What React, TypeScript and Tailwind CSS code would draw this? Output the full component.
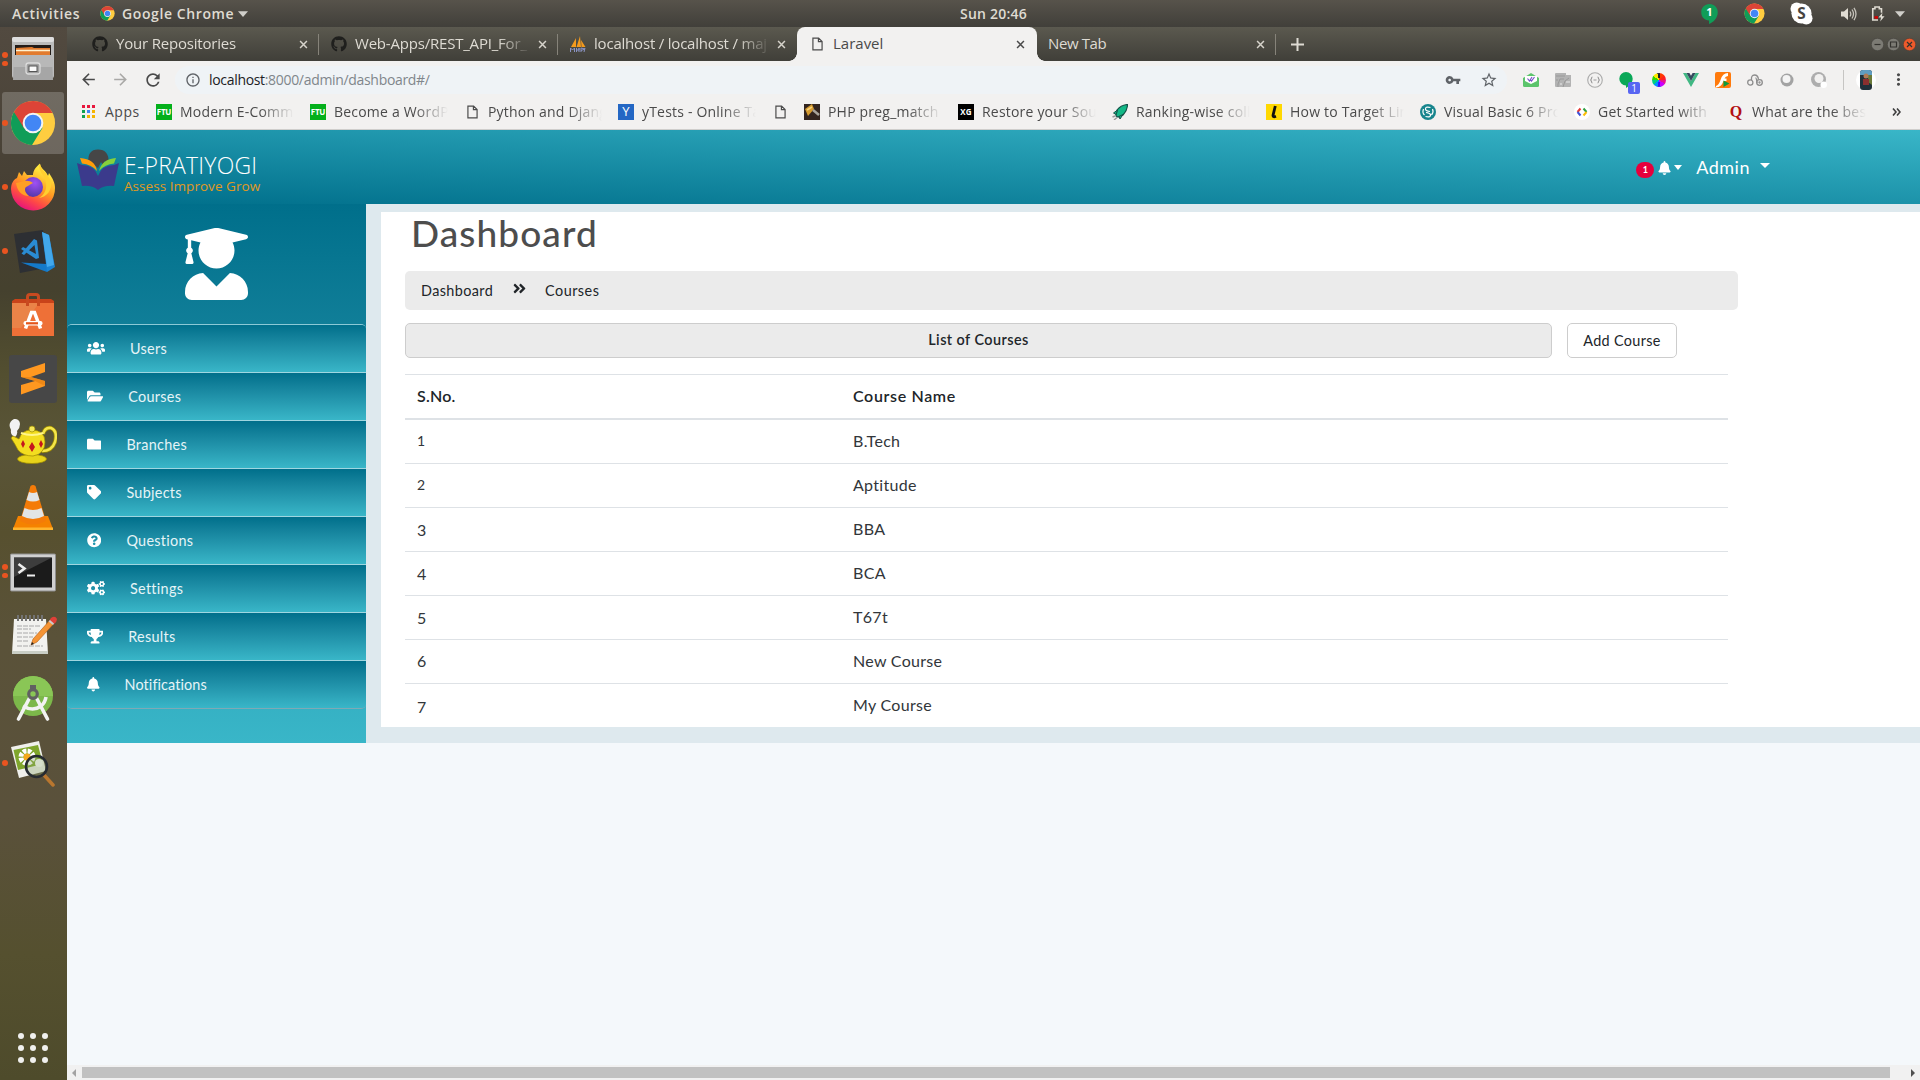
import React from "react";
import {
  FaUserGraduate, FaUsers, FaFolderOpen, FaFolder, FaTag, FaQuestionCircle, FaCogs, FaTrophy, FaBell,
  FaGithub, FaAngleDoubleRight,
} from "react-icons/fa";
import { MdArrowBack, MdArrowForward, MdRefresh, MdInfoOutline, MdVpnKey, MdStarBorder, MdMoreVert } from "react-icons/md";

/* ---------- shared drawings ---------- */

function Chrome({ className }: { className: string }) {
  return (
    <svg viewBox="0 0 48 48" className={className} preserveAspectRatio="none">
      <circle cx="24" cy="24" r="23" fill="#ffcd40" />
      <path d="M24 24 L4.1 12.5 A23 23 0 0 0 23 47 L34 29 Z" fill="#109d58" />
      <path d="M24 13.5 H44.4 A23 23 0 0 0 4.1 12.5 L15 30 Z" fill="#dc4437" />
      <circle cx="24" cy="24" r="10.8" fill="#f4f4f4" />
      <circle cx="24" cy="24" r="8.7" fill="#4286f5" />
    </svg>
  );
}

function FileIcon({ className }: { className: string }) {
  return (
    <svg viewBox="0 0 12 15" className={className} fill="none" stroke="#4b4b4b" strokeWidth="1.3">
      <path d="M1 1 H7.2 L11 4.8 V14 H1 Z M7 1 V5 H11" />
    </svg>
  );
}

function Cross({ className }: { className: string }) {
  return (
    <svg viewBox="0 0 10 10" className={className} fill="none" strokeWidth="1.7">
      <path d="M1.2 1.2 L8.8 8.8 M8.8 1.2 L1.2 8.8" />
    </svg>
  );
}

function Down({ className }: { className: string }) {
  return (
    <svg viewBox="0 0 10 6" className={className}>
      <path d="M0 0.3 H10 L5 6 Z" fill="#d0cfca" />
    </svg>
  );
}

/* ---------- desktop top bar ---------- */

function TopBar() {
  return (
    <div className="grid h-[27px] grid-cols-[1fr_auto_1fr] items-center bg-linear-to-b from-[#57534b] to-[#413f3a] text-[14px] font-semibold text-[#dfdbd2]">
      <div className="flex items-center pl-3">
        <span className="w-[88px] tracking-[0.7px]">Activities</span>
        <Chrome className="size-[15px]" />
        <span className="ml-[7px] w-[116px] whitespace-nowrap tracking-[0.6px]">Google Chrome</span>
        <Down className="h-[6px] w-[10px]" />
      </div>
      <div className="pl-[67px] text-[14px]"><span className="tracking-[0.2px]">Sun 20:46</span></div>
      <div className="flex items-center justify-end pr-[15px]">
        <svg viewBox="0 0 20 24" className="mr-[25px] h-[22px] w-[19px]">
          <path d="M10 1 C4.500 1 1 5 1 10 C1 15 4.500 19 9.500 19 V23 C14 21 19 16.500 19 10 C19 5 15.500 1 10 1 Z" fill="#109d58" />
          <text x="10" y="14" fontSize="12" fontWeight="700" textAnchor="middle" fill="#fff">1</text>
        </svg>
        <Chrome className="mr-[25px] size-[21px]" />
        <svg viewBox="0 0 24 24" className="mr-[28px] size-[23px]">
          <circle cx="12" cy="12" r="10.500" fill="#fff" />
          <circle cx="7" cy="7" r="6.500" fill="#fff" />
          <circle cx="17" cy="17" r="6.500" fill="#fff" />
          <text x="12" y="18" fontSize="16" fontWeight="700" textAnchor="middle" fill="#47443f">S</text>
        </svg>
        <svg viewBox="0 0 16 16" className="mr-[14px] size-4">
          <path d="M0 5.500 H3 L7 2 V14 L3 10.500 H0 Z" fill="#dfdbd2" />
          <path d="M9 5.500 Q10.600 8 9 10.500 M11 3.500 Q14 8 11 12.500 M13 1.800 Q17 8 13 14.200" fill="none" stroke="#c5c2ba" strokeWidth="1.300" />
        </svg>
        <svg viewBox="0 0 16 18" className="mr-[10px] h-[17px] w-[14px]">
          <path d="M8 16.500 H2 V3.500 H4.500 V1.500 H9.500 V3.500 H12 V8" fill="none" stroke="#dfdbd2" strokeWidth="1.800" />
          <rect x="4" y="12" width="4" height="3" fill="#d40000" />
          <path d="M13 8 L8.500 13.500 H11.500 L10.500 18 L15.500 12 H12.500 Z" fill="#dfdbd2" />
        </svg>
        <Down className="h-[6px] w-[10px]" />
      </div>
    </div>
  );
}

/* ---------- dock ---------- */

function Files() {
  return (
    <svg viewBox="0 0 48 48" className="size-12">
      <rect x="3" y="2" width="42" height="41" rx="2" fill="#bcbcbc" />
      <rect x="3" y="2" width="42" height="5" rx="2" fill="#dedede" />
      <rect x="6" y="10" width="36" height="12" fill="#241c18" />
      <path d="M7 13 L23 12 L25 13 H41 V20 H7 Z" fill="#e27b2e" />
      <path d="M7 15.500 H41" stroke="#fff1cf" strokeWidth="1.500" />
      <path d="M5 20 H43 L44 45 H4 Z" fill="#a6a6a6" />
      <path d="M5 20 H43 L44 32 H4 Z" fill="#b8b8b8" />
      <rect x="17" y="28" width="14" height="11" rx="2.500" fill="#a0a0a0" stroke="#dcdcdc" strokeWidth="1.300" />
      <rect x="20" y="31" width="8" height="5.500" fill="#fafafa" stroke="#555" />
    </svg>
  );
}

function Firefox() {
  return (
    <svg viewBox="0 0 48 48" className="size-12">
      <defs>
        <linearGradient id="fx" x1="0.8" y1="0" x2="0.3" y2="1">
          <stop offset="0.15" stopColor="#ffe83f" />
          <stop offset="0.5" stopColor="#ff9a22" />
          <stop offset="0.75" stopColor="#ff4a45" />
          <stop offset="1" stopColor="#e50f80" />
        </linearGradient>
        <radialGradient id="fxp" cx="0.6" cy="0.3" r="0.8">
          <stop offset="0" stopColor="#a050f5" />
          <stop offset="1" stopColor="#4b35a0" />
        </radialGradient>
      </defs>
      <path d="M8 15 L10 9 L13 13 L15 8 L18 12 L24 12 C24 7 28 3 31 0.500 C31 6 37 7 39 13 L40 10 C44 16 46 20 46 25 A22 22 0 0 1 2 26 C2 21 4 17 8 15 Z" fill="url(#fx)" />
      <circle cx="24" cy="24" r="10" fill="url(#fxp)" />
      <path d="M7 20 L14 18.500 C18 17 21 18 24 20 C21 21 20 23 17 24 C15 26 16 30 20 33 C12 33 8 27 7 20 Z" fill="#ff9f25" />
      <path d="M31 1 C28 8 36 12 37 20 C38 27 35 32 30 35 C38 34 43 27 42 19 C40 12 33 8 31 1 Z" fill="#ffcf30" />
    </svg>
  );
}

function VsCode() {
  return (
    <svg viewBox="0 0 48 48" className="size-12">
      <path d="M5 7 L34 3 L42 40 L11 46 Z" fill="#2d2f33" />
      <path d="M12 35.500 L38 37 L38 45 Z" fill="#1479c9" />
      <path d="M33 5 L40 8 L46 40 L38 45 Z" fill="#1b83d3" />
      <path d="M33 5 L40 8 L45 38 L38 40 Z" fill="#42a8ec" />
      <path d="M25 12 L28 13.500 L30 31 L27 32 L12 22 L14 20 L27 27 L25.500 18 L15 28 L12.500 26.500 Z" fill="#2a8bd2" />
    </svg>
  );
}

function Software() {
  return (
    <svg viewBox="0 0 48 48" className="mt-0.5 size-12">
      <path d="M3 9 L6 7 H42 L45 9 V12 H3 Z" fill="#c9431a" />
      <rect x="3" y="11" width="42" height="33" fill="#ee7037" />
      <path d="M3 11 H30 L12 36 H3 Z" fill="#e88b50" opacity="0.7" />
      <path d="M18.500 14 V5 Q18.500 2.500 21 2.500 H27 Q29.500 2.500 29.500 5 V14" fill="none" stroke="#c84a20" strokeWidth="3" />
      <path d="M16.500 36.500 L22.500 20.500 H25.500 L31.500 36.500" fill="none" stroke="#fff" strokeWidth="3.500" />
      <rect x="14.500" y="29" width="19" height="4.500" rx="2" fill="#fff" />
      <rect x="17" y="30.200" width="12" height="2.200" fill="#e4551b" />
    </svg>
  );
}

function Sublime() {
  return (
    <svg viewBox="0 0 48 48" className="size-12">
      <rect width="48" height="48" rx="3" fill="#474747" />
      <path d="M12 16 L36 8 V17 L22 22 L36 26 V31 L12 39.500 V30 L26 26 L12 22 Z" fill="#ff9820" />
      <path d="M12 22 L22 22 L36 26 V31 L26 26 Z" fill="#e27d10" opacity="0.6" />
    </svg>
  );
}

function Teapot() {
  return (
    <svg viewBox="0 0 48 48" className="-mt-1 size-12">
      <path d="M5 2 a5 5 0 0 1 6 5 q0 4 -3 7 q1 3 -2 6 q-5 -2 -4 -7 q-4 -7 3 -11 Z" fill="#f2f2f2" />
      <path d="M34 17 Q36 10 42 11 Q49 14 46 25 Q43 34 33 34" fill="none" stroke="#9c8a00" strokeWidth="4" />
      <path d="M34 17 Q36 10 42 11 Q49 14 46 25 Q43 34 33 34" fill="none" stroke="#f4e54a" strokeWidth="2.500" />
      <ellipse cx="23" cy="42" rx="14.500" ry="4.500" fill="#e8d31a" stroke="#9c8a00" strokeWidth="0.700" />
      <path d="M4 19 L10 22 Q13 13 22 13 Q36 13 36 25 Q36 37 24 39 Q14 39 9 33 Q6 27 2 21 Z" fill="#f3dd20" stroke="#9c8a00" strokeWidth="0.700" />
      <path d="M12 16 Q23 20 34 16" fill="none" stroke="#fff58a" strokeWidth="2" />
      <circle cx="23" cy="12" r="3" fill="#f6e85a" stroke="#9c8a00" strokeWidth="0.700" />
      <path d="M14 23 l2 4 -2 4 -2 -4 Z M23 25 l3 5 -3 5 -3 -5 Z M32 23 l2 4 -2 4 -2 -4 Z" fill="#c5161d" />
    </svg>
  );
}

function Vlc() {
  return (
    <svg viewBox="0 0 48 48" className="size-12">
      <path d="M9 33 H39 L44 46 H4 Z" fill="#f58200" />
      <path d="M4 44.500 H44 V47 H4 Z" fill="#ffb52e" />
      <path d="M21.500 3 Q24 1 26.500 3 L37 38 Q24 45 11 38 Z" fill="#f47b08" />
      <path d="M20 9 Q24 11 28 9 L30.500 17 Q24 20 17.500 17 Z M15.500 25 Q24 29 32.500 25 L35 33 Q24 39 13 33 Z" fill="#e2e5e6" />
    </svg>
  );
}

function Terminal() {
  return (
    <svg viewBox="0 0 48 48" className="size-12">
      <rect x="1.500" y="7" width="45" height="37" rx="1" fill="#d0d0d0" stroke="#8e8e8e" />
      <rect x="5" y="10.500" width="38" height="30" fill="#1b1b1b" />
      <path d="M5 10.500 H43 L5 30 Z" fill="#4b4b4b" opacity="0.7" />
      <path d="M9.500 17 L15.500 21.500 L9.500 26" fill="none" stroke="#eee" strokeWidth="2.600" />
      <path d="M18 28.500 H26" stroke="#eee" strokeWidth="2" />
    </svg>
  );
}

function Notes() {
  return (
    <svg viewBox="0 0 48 48" className="size-12">
      <path d="M5 8 H37 L39 43 H3 Z" fill="#f2f2ef" />
      <path d="M3 40 H39 V43 H3 Z" fill="#c9cec5" />
      <path d="M9 4 v6 M13 4 v6 M17 4 v6 M21 4 v6 M25 4 v6 M29 4 v6 M33 4 v6" stroke="#737373" strokeWidth="2" />
      <path d="M8 15 H32 M8 18 H22 M8 22 H28 M8 26 H24 M8 30 H20 M8 35 H34" stroke="#a8a8a8" strokeWidth="1" strokeDasharray="5 1" />
      <path d="M22 34 L24 28 L41 9 L45 12.500 L28 31 Z" fill="#f59434" stroke="#b35c12" strokeWidth="0.600" />
      <path d="M40 10 L42 7 Q46 4 48 8 Q48 11 45 13 Z" fill="#df4038" />
      <path d="M39.500 10.500 L41 9 L45 12.500 L44 14 Z" fill="#ccc" />
      <path d="M22 34 L23 31 L25 33 Z" fill="#222" />
    </svg>
  );
}

function Android() {
  return (
    <svg viewBox="0 0 48 48" className="size-12">
      <circle cx="24" cy="21" r="20" fill="#7cb84a" />
      <path d="M4 21 a20 20 0 0 1 40 0 Z" fill="#8ac656" />
      <path d="M20 24 L9.500 44 M28 24 L38.500 44" stroke="#f2f2f2" strokeWidth="3.600" strokeLinecap="round" />
      <path d="M14 31 Q24 37 32 31 Q36 28 37 22" fill="none" stroke="#f2f2f2" strokeWidth="3.600" />
      <rect x="21" y="10" width="6" height="6" fill="#616161" />
      <circle cx="24" cy="19" r="4.300" fill="none" stroke="#616161" strokeWidth="3.200" />
    </svg>
  );
}

function ImageViewer() {
  return (
    <svg viewBox="0 0 48 48" className="size-12">
      <path d="M2 8 L30 2 L37 32 L10 39 Z" fill="#f0f0ec" />
      <path d="M4.500 11 L29 6 L34 25 L9 31 Z" fill="#7fa62c" />
      <circle cx="18" cy="18" r="6" fill="none" stroke="#fff" strokeWidth="5" strokeDasharray="3.500 1.200" />
      <circle cx="18" cy="18" r="3.500" fill="#f5a81c" />
      <circle cx="30" cy="24" r="4" fill="#fff" />
      <path d="M35 36 L44 46" stroke="#b9772f" strokeWidth="3.500" strokeLinecap="round" />
      <circle cx="27.500" cy="27.500" r="10.500" fill="#88a06a" fillOpacity="0.350" stroke="#262b31" strokeWidth="2.600" />
    </svg>
  );
}

const dock = [
  { icon: <Files />, dots: 2 },
  { icon: <Chrome className="size-[46px]" />, dots: 1, active: true },
  { icon: <Firefox />, dots: 1 },
  { icon: <VsCode />, dots: 1 },
  { icon: <Software />, dots: 0 },
  { icon: <Sublime />, dots: 0 },
  { icon: <Teapot />, dots: 0 },
  { icon: <Vlc />, dots: 0 },
  { icon: <Terminal />, dots: 2 },
  { icon: <Notes />, dots: 0 },
  { icon: <Android />, dots: 0 },
  { icon: <ImageViewer />, dots: 1 },
];

function Dock() {
  return (
    <div className="flex w-[67px] shrink-0 flex-col bg-[linear-gradient(to_bottom,#524a40_0%,#474034_15%,#45412e_25%,#534f30_33%,#5a5538_40%,#57502f_48%,#5a5239_58%,#5a513b_75%,#55502f_88%,#4e4b2b_100%)]">
      {dock.map((d, i) => (
        <div key={i} className="relative flex h-16 items-center justify-center pr-[1px]">
          {d.active && <div className="absolute top-px left-[2px] h-[62px] w-[62px] rounded-[3px] bg-white/20" />}
          <div className="relative">{d.icon}</div>
          <div className="absolute left-[2px] flex flex-col gap-[3px]">
            {d.dots > 0 && <i className="size-[5.5px] rounded-full bg-[#e95420]" />}
            {d.dots > 1 && <i className="size-[5.5px] rounded-full bg-[#e95420]" />}
          </div>
        </div>
      ))}
      <div className="mt-auto mb-[17px] ml-[18px] grid w-[30px] grid-cols-3 gap-[6px]">
        {Array.from({ length: 9 }, (_, i) => <i key={i} className="size-[6px] rounded-full bg-[#f0f0ee]" />)}
      </div>
    </div>
  );
}

/* ---------- browser chrome ---------- */

function Sails() {
  return (
    <svg viewBox="0 0 16 16" className="size-4">
      <path d="M1 11 L6 2 V11 Z M6.500 11 L10 0 L11 11 Z M11.500 11 L11 4 L15.500 11 Z" fill="#f39a1e" />
      <path d="M0.500 16 V12 L2.500 14 L4.500 12 V16 M6.500 12 V16 M6.500 14 H9 V12 V16 M11 16 V12 L15 13 L11 14.500 M14 16 L15 12" fill="none" stroke="#8a93c4" strokeWidth="1" />
    </svg>
  );
}

const darkTabs = [
  { title: "Your Repositories", icon: <FaGithub className="size-4 text-[#1f1f1d]" />, sep: true },
  { title: "Web-Apps/REST_API_For_", icon: <FaGithub className="size-4 text-[#1f1f1d]" />, sep: true },
  { title: "localhost / localhost / maj", icon: <Sails />, sep: false },
];

const FADE = "[mask-image:linear-gradient(to_right,#000_calc(100%-34px),transparent)]";

function Tabs() {
  return (
    <div className="flex h-[34px] bg-linear-to-b from-[#5b594f] to-[#403f39] pl-[13px] text-[15px] tracking-[-0.2px] text-[#dedbd3]">
      {darkTabs.map((t) => (
        <div key={t.title} className="flex w-[239px] items-center pl-3">
          {t.icon}
          <span className={`ml-2 w-[177px] overflow-hidden pb-0.5 whitespace-nowrap ${FADE}`}>{t.title}</span>
          <Cross className="ml-[6px] size-[9px] stroke-[#d6d3cb]" />
          {t.sep && <i className="ml-auto h-[21px] w-px bg-[#86837a]" />}
        </div>
      ))}
      <div className="relative flex w-[240px] items-center rounded-t-lg bg-[#f2f1f0] pl-[15px] text-[#4a4a4a]">
        <i className="absolute bottom-0 -left-2 size-2 bg-[radial-gradient(circle_at_0_0,transparent_7.5px,#f2f1f0_8px)]" />
        <i className="absolute -right-2 bottom-0 size-2 bg-[radial-gradient(circle_at_100%_0,transparent_7.5px,#f2f1f0_8px)]" />
        <FileIcon className="h-[14px] w-[11px]" />
        <span className="ml-[10px] w-[183px] pb-0.5 tracking-[0px]">Laravel</span>
        <Cross className="size-[9px] stroke-[#4a4a4a]" />
      </div>
      <div className="flex w-[239px] items-center pl-[11px]">
        <span className="w-[208px] pb-0.5 tracking-[-0.4px]">New Tab</span>
        <Cross className="size-[9px] stroke-[#d6d3cb]" />
        <i className="ml-auto h-[21px] w-px bg-[#86837a]" />
      </div>
      <svg viewBox="0 0 13 13" className="mt-[11px] ml-[15px] size-[13px]">
        <path d="M6.500 0 V13 M0 6.500 H13" stroke="#dedbd3" strokeWidth="2" />
      </svg>
      <div className="mr-[4px] ml-auto flex items-center gap-[3px]">
        <WindowButton className="fill-[#7c7b74]" d="M3.500 6.500 H9.500" />
        <WindowButton className="fill-[#7c7b74]" d="M3.500 4 H9.500 V9 H3.500 Z" />
        <WindowButton className="fill-[#ee5a2b]" d="M4 4 L9 9 M9 4 L4 9" />
      </div>
    </div>
  );
}

function WindowButton({ className, d }: { className: string; d: string }) {
  return (
    <svg viewBox="0 0 13 13" className="size-[13px]">
      <circle cx="6.500" cy="6.500" r="6.200" className={className} stroke="#3a3934" strokeWidth="0.500" />
      <path d={d} fill="none" stroke="#33322e" strokeWidth="1.200" />
    </svg>
  );
}

const extensions = [
  <svg viewBox="0 0 16 16" className="size-4" key="mail"><path d="M0 6 L8 1 L16 6 V13.500 Q16 15 14.500 15 H1.500 Q0 15 0 13.500 Z" fill="#5cc46c" /><path d="M2 4 H14 V9 L8 12 L2 9 Z" fill="#fff" /><path d="M4.500 6.500 L6.500 9 L9 5 M7.500 8 L8.500 9 L11.500 5" fill="none" stroke="#7a52c9" strokeWidth="1.200" /></svg>,
  <svg viewBox="0 0 16 16" className="size-4" key="grey"><path d="M0 2 Q0 1 1 1 H11 V3 H16 V14 Q16 15 15 15 H1 Q0 15 0 14 Z" fill="#b3b3b3" /><path d="M1 4 H10 M3 15 V12 L5 7 L9 7 M8 15 L10 9 L14 6 M1 8 H3" stroke="#999" strokeWidth="1" fill="none" /><path d="M11 10 H15 M5 12 H7" stroke="#d8d8d8" strokeWidth="1.500" /></svg>,
  <svg viewBox="0 0 16 16" className="size-4" key="brace"><circle cx="8" cy="8" r="7.300" fill="none" stroke="#ababab" strokeWidth="1.100" /><path d="M5.500 5 Q4.500 5 4.500 6.500 L3.700 8 L4.500 9.500 Q4.500 11 5.500 11 M10.500 5 Q11.500 5 11.500 6.500 L12.300 8 L11.500 9.500 Q11.500 11 10.500 11 M6.500 8 H9.500" fill="none" stroke="#999" strokeWidth="1.100" /></svg>,
  <span className="relative block size-4" key="hang">
    <svg viewBox="0 0 16 16" className="size-4"><path d="M7 0 A6.700 6.700 0 0 0 7 13.400 V16 Q13.700 12 13.700 6.700 A6.700 6.700 0 0 0 7 0 Z" fill="#0aa858" /></svg>
    <span className="absolute top-[10px] left-[9px] flex h-3 w-3 items-center justify-center rounded-[2px] bg-[#5865f2] text-[10px] leading-none text-white">1</span>
  </span>,
  <i className="block size-[14px] rounded-full bg-[conic-gradient(#222_0_12deg,#ff3a00_12deg_45deg,#ff2020_45deg_85deg,#e81090_85deg_125deg,#c800ff_125deg_165deg,#3a10ff_165deg_195deg,#0090ff_195deg_230deg,#00d080_230deg_270deg,#30d800_270deg_305deg,#ffe600_305deg_345deg,#222_345deg)]" key="wheel" />,
  <svg viewBox="0 0 16 16" className="size-4" key="vue"><path d="M0 1 H3.500 L8 9 L12.500 1 H16 L8 15 Z" fill="#41b883" /><path d="M3.500 1 H6.400 L8 3.800 L9.600 1 H12.500 L8 9 Z" fill="#35495e" /></svg>,
  <svg viewBox="0 0 16 16" className="size-4" key="flash"><rect width="16" height="16" rx="2" fill="#ff7a0c" /><path d="M1 14 Q4 13 5.500 8 Q7.500 1 13 1 V4 Q10.500 4 9.500 6.500 H11.500 V9 H8.500 Q6.500 15 1 15.500 Z" fill="#fff" /><path d="M8.500 8.500 L14.500 11.500 L8.500 15 Z" fill="#0e9b3c" /></svg>,
  <svg viewBox="0 0 16 16" className="size-4" key="rings"><g fill="none" stroke="#8d8d8d" strokeWidth="1.300"><path d="M4.500 8 Q4 3 7.500 3 Q11 3 11.500 7.500 M8.500 6 Q9.500 6 10 11" /><circle cx="3.300" cy="10.500" r="2.600" /><circle cx="12.500" cy="10.500" r="2.800" /><circle cx="12.500" cy="10.500" r="0.500" /></g></svg>,
  <svg viewBox="0 0 16 16" className="size-4" key="ring"><circle cx="8" cy="8" r="6.500" fill="#a3a3a3" /><circle cx="7.500" cy="7" r="4" fill="#f4f4f4" /></svg>,
  <svg viewBox="0 0 16 16" className="size-4" key="ring2"><circle cx="7.500" cy="7.500" r="7.500" fill="#adadad" /><circle cx="8" cy="6.500" r="4.500" fill="#f2f1f0" /><circle cx="12.700" cy="12.700" r="3.200" fill="#fff" /></svg>,
];

function Toolbar() {
  return (
    <div className="flex h-[37px] items-center bg-[#f2f1f0] text-[#4a4a4a]">
      <div className="flex w-[108px] items-center gap-[13px] pl-[12px]">
        <MdArrowBack className="size-[19px]" />
        <MdArrowForward className="size-[19px] text-[#a9a8a6]" />
        <MdRefresh className="size-[20px]" />
      </div>
      <div className="flex h-[28px] w-[1332px] items-center rounded-full bg-[#eff3f6] pl-[10px]">
        <MdInfoOutline className="size-4 text-[#5f6368]" />
        <span className="ml-2 text-[14px] tracking-[-0.32px] text-[#80868b]"><span className="text-[#202124]">localhost</span>:8000/admin/dashboard#/</span>
        <MdVpnKey className="ml-auto size-4 text-[#5f6368]" />
        <MdStarBorder className="mr-[9px] ml-[19px] size-[18px] text-[#5f6368]" />
      </div>
      <div className="ml-2 flex">
        {extensions.map((e, i) => <div key={i} className="flex w-8 items-center justify-center">{e}</div>)}
      </div>
      <i className="ml-[8px] h-5 w-px bg-[#c6c5c3]" />
      <div className="ml-[12px] flex size-[20px] items-center justify-center rounded-full bg-white">
        <svg viewBox="0 0 12 20" className="h-5 w-3"><rect width="12" height="20" rx="3" fill="#21303a" /><path d="M0 3 Q0 0 3 0 H9 Q12 0 12 3 V5 H0 Z" fill="#5f9cc0" /><path d="M8 5 H12 V15 L8 12 Z" fill="#6a7a3a" /><circle cx="6" cy="6" r="2.500" fill="#b07a55" /><path d="M3 9 H9 V15 H3 Z" fill="#8b2f2f" /></svg>
      </div>
      <MdMoreVert className="ml-[13px] size-[19px]" />
    </div>
  );
}

const ftu = <span className="flex size-4 items-center justify-center bg-[#04b01b] text-[8px] font-bold tracking-[-0.2px] text-white">FTU</span>;
const bookmarks = [
  { title: "Modern E-Comm", icon: ftu },
  { title: "Become a WordP", icon: ftu },
  { title: "Python and Djang", icon: <FileIcon className="mx-[2.500px] h-[14px] w-[11px]" /> },
  { title: "yTests - Online Tal", icon: <span className="flex size-4 items-center justify-center bg-[#2467c4] text-[13px] text-white">Y</span> },
  { title: "", icon: <FileIcon className="mx-[2.500px] h-[14px] w-[11px]" /> },
  { title: "PHP preg_match", icon: <svg viewBox="0 0 16 16" className="size-4"><rect width="16" height="16" fill="#33251f" /><path d="M1 5 L8 0 L10 5 L4 12 Z" fill="#d59a2e" /><path d="M3 6 L8 3" stroke="#f6d27a" strokeWidth="1.500" /><path d="M9 6 L15 11" stroke="#a8a39b" strokeWidth="2.500" /></svg> },
  { title: "Restore your Sour", icon: <span className="flex size-4 items-center justify-center bg-black text-[8px] font-bold text-white">XG</span> },
  { title: "Ranking-wise colle", icon: <svg viewBox="0 0 16 16" className="size-4"><path d="M4 12 L5 6 Q9 1 15.500 0.500 Q15.500 6 11 11 L6 13 Z" fill="#12b886" stroke="#155248" strokeWidth="1.200" /><path d="M5.500 6 L1.500 9 L4 10.500 Z M11 10.500 L8 15 L7 12.500 Z" fill="#12b886" stroke="#155248" /><path d="M0.500 13 L3 12 M2 16 L5 13.500" stroke="#999" strokeWidth="1.400" /></svg> },
  { title: "How to Target Link", icon: <svg viewBox="0 0 16 16" className="size-4"><rect width="16" height="16" fill="#ffd800" /><path d="M9.300 2 L7 11.500 Q7 13.500 10 12.300" fill="none" stroke="#111" strokeWidth="2.800" /></svg> },
  { title: "Visual Basic 6 Pro", icon: <svg viewBox="0 0 16 16" className="size-4"><circle cx="8" cy="8" r="8" fill="#17858d" /><path d="M10.500 3.500 Q5 2 5.500 5.500 Q6 7 10 7.500 M5.500 12.500 Q11 14 10.500 10.500 Q10 9 6 8.500 M3.500 5 Q2 9 4.500 11 M12.500 5 Q14 8 11.500 11" fill="none" stroke="#fff" strokeWidth="1.200" /></svg> },
  { title: "Get Started with", icon: <svg viewBox="0 0 16 16" className="size-4"><circle cx="8" cy="8" r="8" fill="#fff" /><g fill="none" strokeWidth="2"><path d="M6.500 4.500 L3.500 8" stroke="#e53935" /><path d="M3.500 8 L6.500 11.500" stroke="#3f51d6" /><path d="M9.500 4.500 L12.500 8" stroke="#2ea043" /><path d="M12.500 8 L9.500 11.500" stroke="#fbbc05" /></g></svg> },
  { title: "What are the best", icon: <span className="flex size-4 items-center justify-center font-['Liberation_Serif'] text-[16px] leading-none font-bold text-[#b31010]">Q</span> },
];

function Bookmarks() {
  return (
    <div className="flex h-[32px] items-center border-b border-[#cfcecc] bg-[#f2f1f0] pb-1 pl-[15px] text-[14px] tracking-[0.2px] text-[#4a4a4a]">
      <div className="grid w-[13px] grid-cols-3 gap-[2px]">
        {["bg-[#e8173d]", "bg-[#e8173d]", "bg-[#e8173d]", "bg-[#12a150]", "bg-[#4285f4]", "bg-[#f5b400]", "bg-[#12a150]", "bg-[#f5b400]", "bg-[#f5b400]"].map((c, i) => (
          <i key={i} className={`size-[3px] ${c}`} />
        ))}
      </div>
      <span className="ml-[10px] w-[51px] tracking-[0.5px]">Apps</span>
      {bookmarks.map((b, i) =>
        b.title ? (
          <div key={i} className="flex w-[154px] shrink-0 items-center">
            {b.icon}
            <span className={`ml-2 w-[114px] overflow-hidden whitespace-nowrap ${FADE}`}>{b.title}</span>
          </div>
        ) : (
          <div key={i} className="w-8 shrink-0">{b.icon}</div>
        ),
      )}
      <svg viewBox="0 0 9 8" className="ml-[10px] h-2 w-[9px]" fill="none" stroke="#3f3f3f" strokeWidth="1.600">
        <path d="M1 0.500 L4 4 L1 7.500 M5 0.500 L8 4 L5 7.500" />
      </svg>
    </div>
  );
}

/* ---------- page ---------- */

function Logo() {
  return (
    <div className="flex items-start">
      <svg viewBox="0 0 44 42" className="ml-px h-[42px] w-[44px]">
        <path d="M12.500 14 Q11 0.500 22 0.500 Q33 0.500 32.500 13 L30 16 L28.500 12 L27 16.500 L25 13 L22 19 Q18 15 12.500 14 Z" fill="#464646" />
        <path d="M4 9 Q19 10 21 22 Q15 15 6 14.500 Z" fill="#ff9d0a" />
        <path d="M40 9 Q26 10 23 22 Q29 15 38 14.500 Z" fill="#86d13c" />
        <path d="M1 14 L6 16 Q18 16 22 27 Q26 16 38 16 L43 14 L38 37 Q28 36 22 41 Q16 36 6 37 Z" fill="#3b3a8c" />
      </svg>
      <div className="ml-[4px] pt-px font-['Open_Sans',sans-serif]">
        <div className="text-[23px] leading-[31px] font-light tracking-[0.2px] text-white">E-PRATIYOGI</div>
        <div className="-mt-1 text-[13.5px] leading-[18px] tracking-[0.05px] text-[#e0991f]">Assess Improve Grow</div>
      </div>
    </div>
  );
}

function Header() {
  return (
    <header className="flex h-[74px] bg-[linear-gradient(to_top_right,#006f8b,#39b6c8)] pl-[8px] text-white">
      <div className="mt-[19px]"><Logo /></div>
      <div className="mt-[23px] mr-[150px] ml-auto flex h-[28px] items-center">
        <span className="mt-1.5 flex h-4 w-[18px] items-center justify-center rounded-full bg-[#e6003d] text-[9px] font-bold">1</span>
        <FaBell className="mt-0.5 ml-[4px] h-[14px] w-[13px]" />
        <i className="mt-px ml-[3px] border-x-[4.5px] border-t-[5px] border-x-transparent border-t-white" />
        <span className="ml-[14px] text-[18px] tracking-[0.5px]">Admin</span>
        <i className="mb-1 ml-[10px] border-x-[5px] border-t-[5px] border-x-transparent border-t-white" />
      </div>
    </header>
  );
}

const menu = [
  { label: "Users", icon: <FaUsers className="h-[14.4px] w-[18px]" /> },
  { label: "Courses", icon: <FaFolderOpen className="h-[14.4px] w-[16.2px]" /> },
  { label: "Branches", icon: <FaFolder className="size-[14.4px]" /> },
  { label: "Subjects", icon: <FaTag className="size-[14.4px]" /> },
  { label: "Questions", icon: <FaQuestionCircle className="size-[14.4px]" /> },
  { label: "Settings", icon: <FaCogs className="h-[14.4px] w-[18px]" /> },
  { label: "Results", icon: <FaTrophy className="h-[14.4px] w-[16.2px]" /> },
  { label: "Notifications", icon: <FaBell className="h-[14.4px] w-[12.6px]" /> },
];

function Sidebar() {
  return (
    <aside className="w-[299px] shrink-0 bg-linear-to-b from-[#006f8b] to-[#39b6c8] text-white">
      <div className="flex h-[120px] justify-center pt-[24px]">
        <FaUserGraduate className="h-[72px] w-[63px]" />
      </div>
      <nav className="overflow-hidden rounded-[5px] border-t border-b border-t-[#8cc9d6] border-b-[#7fa9b5]">
        {menu.map((m, i) => (
          <div key={m.label} className={`flex items-center bg-linear-to-b from-[#006f8b] to-[#39b6c8] pl-5 ${i < 7 ? "h-12 border-b border-[#9fd6e0]" : "h-[47px]"}`}>
            {m.icon}
            <span className={`ml-[25px] pt-px text-[14.4px] text-[#e6f4f7] ${i < 7 ? "tracking-[0.3px]" : "tracking-[0.1px]"}`}>{m.label}</span>
          </div>
        ))}
      </nav>
    </aside>
  );
}

const rows = [
  { n: "1", name: "B.Tech", cls: "text-[14px]" },
  { n: "2", name: "Aptitude", cls: "text-[14px]" },
  { n: "3", name: "BBA", cls: "pt-[3px]" },
  { n: "4", name: "BCA", cls: "pt-[3px]" },
  { n: "5", name: "T67t", cls: "pt-[3px]" },
  { n: "6", name: "New Course", cls: "" },
  { n: "7", name: "My Course", cls: "pt-[3px]" },
];

function Main() {
  return (
    <div className="flex-1 bg-[#dee9ee] pt-2 pl-[15px] text-[#212529]">
      <main className="h-[515px] bg-white pl-6">
        <h1 className="h-[59px] pl-[6px] text-[37px] leading-[41px] font-medium tracking-[1.1px] text-[#4d4d4d]">Dashboard</h1>
        <div className="flex h-[39px] w-[1333px] items-center rounded-[5px] bg-[#ebebeb] pl-4 text-[14.4px]">
          <span className="w-[91px] tracking-[0.4px]">Dashboard</span>
          <FaAngleDoubleRight className="mb-1 size-[15px]" />
          <span className="ml-[18px] tracking-[0.5px]">Courses</span>
        </div>
        <div className="mt-[13px] flex h-[35px] gap-[15px] text-[14.4px]">
          <div className="flex w-[1147px] items-center justify-center rounded-[5px] border border-[#cdcdcd] bg-[#ebebeb] pb-px font-semibold tracking-[0.45px]">List of Courses</div>
          <div className="flex w-[110px] items-center justify-center rounded-[5px] border border-[#cdcdcd] bg-white tracking-[0.35px]">Add Course</div>
        </div>
        <div className="mt-4 w-[1323px] text-[16px]">
          <div className="flex h-[46px] items-center border-t border-b-2 border-[#dee2e6] pb-0.5 pl-3 font-semibold">
            <span className="w-[436px] tracking-[0.2px]">S.No.</span>
            <span className="tracking-[0.65px]">Course Name</span>
          </div>
          {rows.map((r, i) => (
            <div key={r.n} className={`flex h-11 items-center pb-0.5 pl-3 text-[#32363a] ${i < 6 ? "border-b border-[#dee2e6]" : ""}`}>
              <span className={`w-[436px] ${r.cls}`}>{r.n}</span>
              <span className="tracking-[0.3px]">{r.name}</span>
            </div>
          ))}
        </div>
      </main>
    </div>
  );
}

export default function App() {
  return (
    <div className="flex h-[1080px] w-[1920px] flex-col overflow-hidden font-['Open_Sans','Noto_Sans',sans-serif]">
      <TopBar />
      <div className="flex min-h-0 flex-1">
        <Dock />
        <div className="flex min-w-0 flex-1 flex-col">
          <Tabs />
          <Toolbar />
          <Bookmarks />
          <div className="flex flex-1 flex-col bg-[#f4f8fb] font-['Lato',sans-serif]">
            <Header />
            <div className="flex h-[539px]">
              <Sidebar />
              <Main />
            </div>
          </div>
          <div className="flex h-[15px] items-center bg-[#f1f1f1] px-[5px]">
            <i className="border-y-4 border-r-4 border-y-transparent border-r-[#a3a3a3]" />
            <i className="ml-[6px] h-[11px] w-[1808px] bg-[#c1c1c1]" />
            <i className="ml-auto border-y-4 border-l-4 border-y-transparent border-l-[#505050]" />
          </div>
        </div>
      </div>
    </div>
  );
}
